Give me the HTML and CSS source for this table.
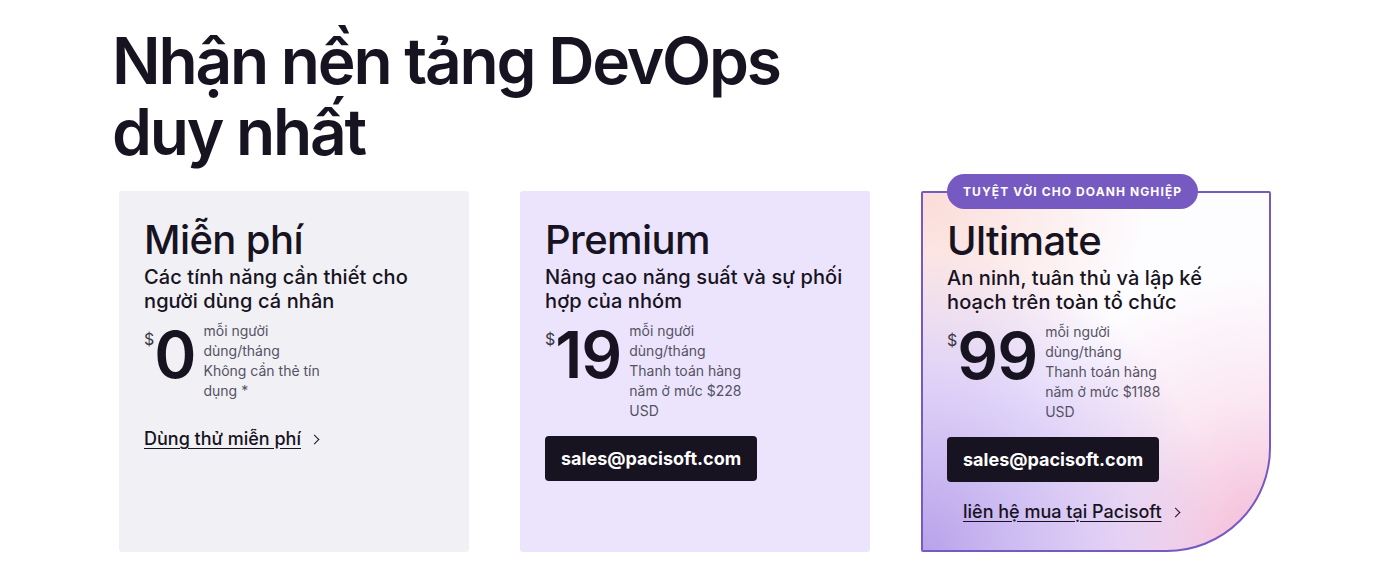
FILE: index.html
```html
<!DOCTYPE html>
<html lang="vi">
<head>
<meta charset="UTF-8" />
<title>Nhận nền tảng DevOps duy nhất</title>
<link rel="stylesheet" href="styles.css">
</head>
<body>

<h1>Nhận nền tảng DevOps<br>duy nhất</h1>

<div class="plans">
  <div class="plan free">
    <h2>Miễn phí</h2>
    <p class="tagline">Các tính năng cần thiết cho người dùng cá nhân</p>
    <div class="price">
      <span class="cur">$</span><span class="amount">0</span>
      <span class="note">mỗi người dùng/tháng<br>Không cần thẻ tín dụng *</span>
    </div>
    <a class="more" href="#">Dùng thử miễn phí</a>
  </div>

  <div class="plan premium">
    <h2>Premium</h2>
    <p class="tagline">Nâng cao năng suất và sự phối hợp của nhóm</p>
    <div class="price">
      <span class="cur">$</span><span class="amount">19</span>
      <span class="note">mỗi người dùng/tháng<br>Thanh toán hàng năm ở mức $228 USD</span>
    </div>
    <a class="button" href="#">sales@pacisoft.com</a>
  </div>

  <div class="plan ultimate">
    <span class="badge">TUYỆT VỜI CHO DOANH NGHIỆP</span>
    <h2>Ultimate</h2>
    <p class="tagline">An ninh, tuân thủ và lập kế hoạch trên toàn tổ chức</p>
    <div class="price">
      <span class="cur">$</span><span class="amount">99</span>
      <span class="note">mỗi người dùng/tháng<br>Thanh toán hàng năm ở mức $1188 USD</span>
    </div>
    <a class="button" href="#">sales@pacisoft.com</a>
    <a class="more indent" href="#">liên hệ mua tại Pacisoft</a>
  </div>
</div>

</body>
</html>
```
FILE: styles.css
```css
body {
  margin: 0;
  font-family: Inter, "Noto Sans", sans-serif;
  color: #171321;
  background: #fff;
}
h1 {
  margin: 0;
  padding: 25px 0 0 112px;
  font-size: 64px;
  font-weight: 600;
  line-height: 71px;
  letter-spacing: -2.2px;
}
.plans {
  display: flex;
  gap: 51px;
  padding: 24px 0 0 119px;
}
.plan {
  width: 350px;
  height: 361px;
  box-sizing: border-box;
  padding: 25px 25px 0 25px;
  border-radius: 3px;
  background: #f1f0f5;
  position: relative;
}
.premium {
  background: #ece4fc;
}
.ultimate {
  border: 2px solid #7759c2;
  border-radius: 2px 2px 104px 2px;
  padding: 24px 24px 0 24px;
  background:
    radial-gradient(circle at 0% 100%, #b9a2ea 0%, rgba(205,186,245,0.6) 35%, rgba(255,255,255,0) 60%),
    radial-gradient(circle at 100% 100%, #f3b7d6 0%, rgba(248,210,228,0.5) 30%, rgba(255,255,255,0) 55%),
    radial-gradient(circle at 0% 0%, #fbdcd8 0%, rgba(255,255,255,0) 45%),
    #fdfcff;
}
.badge {
  position: absolute;
  top: -19px;
  left: 24px;
  background: #7759c2;
  color: #fff;
  font-size: 12px;
  font-weight: 700;
  letter-spacing: 1.1px;
  padding: 10px 16px 9px;
  line-height: 16px;
  border-radius: 18px;
}
h2 {
  margin: 0;
  font-size: 40px;
  font-weight: 500;
  line-height: 48px;
  letter-spacing: -0.6px;
}
.tagline {
  margin: 1px 0 0;
  font-size: 20px;
  font-weight: 500;
  line-height: 24px;
  letter-spacing: 0.1px;
}
.price {
  display: flex;
  align-items: flex-start;
  margin-top: 8px;
}
.cur {
  font-size: 16px;
  line-height: 20px;
  margin-top: 8px;
  color: #3a3845;
}
.amount {
  font-size: 64px;
  font-weight: 600;
  line-height: 64px;
  letter-spacing: -1px;
  margin-top: 2px;
}
.note {
  width: 124px;
  margin-left: 8px;
  font-size: 14px;
  line-height: 20px;
  color: #545264;
}
.more {
  display: inline-block;
  margin-top: 27px;
  font-size: 18px;
  font-weight: 500;
  color: #171321;
  text-decoration: underline;
  text-underline-offset: 3px;
}
.more::after {
  content: "";
  display: inline-block;
  width: 6px;
  height: 6px;
  margin-left: 10px;
  border-top: 1.6px solid #171321;
  border-right: 1.6px solid #171321;
  transform: translateY(-2px) rotate(45deg);
}
.more.indent {
  margin: 19px 0 0 16px;
}
.button {
  display: inline-block;
  margin-top: 15px;
  padding: 0 16px;
  height: 45px;
  line-height: 45px;
  background: #171321;
  color: #fff;
  font-size: 18px;
  font-weight: 700;
  text-decoration: none;
  border-radius: 4px;
}
```
